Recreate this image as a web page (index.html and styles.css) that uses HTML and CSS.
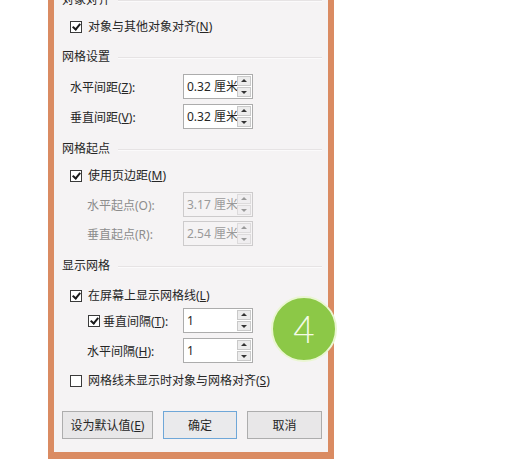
FILE: index.html
```html
<!DOCTYPE html>
<html lang="zh">
<head>
<meta charset="utf-8">
<link rel="stylesheet" href="styles.css">
</head>
<body>
<div class="dialog">
  <div class="section">对象对齐</div>
  <div class="check-row g1"><span class="cb on"></span><span>对象与其他对象对齐(<u>N</u>)</span></div>

  <div class="section g2">网格设置</div>
  <div class="field-row g3"><span class="lbl"><span>水平间距(<u>Z</u>):</span></span><span class="spin"><span class="val">0.32 厘米</span><span class="arrows"><i class="up"></i><i class="dn"></i></span></span></div>
  <div class="field-row g4"><span class="lbl"><span>垂直间距(<u>V</u>):</span></span><span class="spin"><span class="val">0.32 厘米</span><span class="arrows"><i class="up"></i><i class="dn"></i></span></span></div>

  <div class="section g5">网格起点</div>
  <div class="check-row g1"><span class="cb on"></span><span>使用页边距(<u>M</u>)</span></div>
  <div class="field-row sub dis g6"><span class="lbl"><span>水平起点(O):</span></span><span class="spin"><span class="val">3.17 厘米</span><span class="arrows"><i class="up"></i><i class="dn"></i></span></span></div>
  <div class="field-row sub dis g7"><span class="lbl"><span>垂直起点(R):</span></span><span class="spin"><span class="val">2.54 厘米</span><span class="arrows"><i class="up"></i><i class="dn"></i></span></span></div>

  <div class="section g5">显示网格</div>
  <div class="check-row g2"><span class="cb on"></span><span>在屏幕上显示网格线(<u>L</u>)</span></div>
  <div class="field-row nested g7"><span class="lbl"><span class="cb on"></span><span>垂直间隔(<u>T</u>):</span></span><span class="spin"><span class="val">1</span><span class="arrows"><i class="up"></i><i class="dn"></i></span></span></div>
  <div class="field-row sub g8"><span class="lbl"><span>水平间隔(<u>H</u>):</span></span><span class="spin"><span class="val">1</span><span class="arrows"><i class="up"></i><i class="dn"></i></span></span></div>
  <div class="check-row g9"><span class="cb"></span><span>网格线未显示时对象与网格对齐(<u>S</u>)</span></div>

  <div class="buttons">
    <button class="btn b1">设为默认值(<u>E</u>)</button>
    <button class="btn b2 primary">确定</button>
    <button class="btn b3">取消</button>
  </div>
</div>
<div class="badge">4</div>
</body>
</html>
```

FILE: styles.css
```css
html, body {
  margin: 0;
  padding: 0;
  background: #ffffff;
  width: 517px;
  height: 464px;
  overflow: hidden;
  font-family: "Noto Sans", "Noto Sans CJK SC", sans-serif;
  font-size: 12px;
  color: #262626;
}

.dialog {
  box-sizing: border-box;
  width: 286px;
  margin: -8px 0 0 48px;
  background: #f5f3f4;
  border: 6px solid #da8b62;
  border-top: 0;
  border-bottom-width: 7px;
  padding: 0 6px 13px 8px;
}

u { text-decoration: underline; text-underline-offset: 1px; }

.section {
  height: 16px;
  line-height: 16px;
  display: flex;
  align-items: center;
  gap: 8px;
}
.section::after {
  content: "";
  flex: 1;
  height: 1px;
  background: #e6e3e4;
  box-shadow: 0 1px 0 #fbfafb;
}

.check-row {
  height: 16px;
  line-height: 16px;
  display: flex;
  align-items: center;
  gap: 6px;
  padding-left: 8px;
}

.cb {
  box-sizing: border-box;
  width: 12px;
  height: 12px;
  border: 1px solid #3a3a3a;
  background: #ffffff;
  display: inline-block;
  position: relative;
  flex: none;
}
.cb.on::after {
  content: "";
  position: absolute;
  left: 3px;
  top: 0px;
  width: 3px;
  height: 6px;
  border-right: 2px solid #1a1a1a;
  border-bottom: 2px solid #1a1a1a;
  transform: rotate(40deg);
}

.field-row {
  height: 25px;
  display: flex;
  align-items: center;
  padding-left: 8px;
}
.field-row .lbl {
  width: 113px;
  flex: none;
  display: flex;
  align-items: center;
  gap: 3px;
}
.field-row.sub { padding-left: 25px; }
.field-row.sub .lbl { width: 96px; }
.field-row.nested { padding-left: 26px; }
.field-row.nested .lbl { width: 95px; }
.field-row.dis { color: #8c8c8c; }

.spin {
  box-sizing: border-box;
  width: 70px;
  height: 25px;
  border: 1px solid #acacac;
  background: #ffffff;
  display: flex;
  align-items: stretch;
}
.dis .spin {
  border-color: #cdcbcc;
  background: #f5f3f4;
  color: #9a9a9a;
}
.spin .val {
  flex: 1;
  padding-left: 3px;
  line-height: 23px;
  white-space: nowrap;
  overflow: hidden;
}
.arrows {
  width: 14px;
  display: flex;
  flex-direction: column;
  gap: 1px;
  padding: 1px 1px 1px 0;
}
.arrows i {
  flex: 1;
  background: #ececec;
  border: 1px solid #c9c9c9;
  position: relative;
}
.dis .arrows i { background: #f0eef0; border-color: #dddbdc; }
.arrows i::after {
  content: "";
  position: absolute;
  left: 50%;
  top: 50%;
  margin-left: -3px;
  border-left: 3px solid transparent;
  border-right: 3px solid transparent;
}
.arrows i.up::after { margin-top: -2px; border-bottom: 3px solid #333; }
.arrows i.dn::after { margin-top: -1px; border-top: 3px solid #333; }
.dis .arrows i.up::after { border-bottom-color: #9a9a9a; }
.dis .arrows i.dn::after { border-top-color: #9a9a9a; }

.g1 { margin-top: 11px; }
.g2 { margin-top: 14px; }
.g3 { margin-top: 9px; }
.g4 { margin-top: 5px; }
.g5 { margin-top: 12px; }
.g6 { margin-top: 8px; }
.g7 { margin-top: 4px; }
.g8 { margin-top: 5px; }
.g9 { margin-top: 10px; }

.buttons {
  margin-top: 22px;
  display: flex;
  gap: 10px;
}
.btn {
  box-sizing: border-box;
  height: 28px;
  border: 1px solid #adadad;
  background: #e8e7e8;
  font: inherit;
  color: #262626;
  padding: 0;
}
.b1 { width: 91px; }
.b2 { width: 74px; }
.b3 { width: 75px; }
.btn.primary { border-color: #6fa7d8; background: #eaeaec; }

.badge {
  position: absolute;
  left: 271px;
  top: 296px;
  width: 66px;
  height: 66px;
  box-sizing: border-box;
  border-radius: 50%;
  background: #8cc847;
  border: 2px solid #eaf6d2;
  color: #f4fbe6;
  font-family: "Lato", "Open Sans", sans-serif;
  font-weight: 300;
  font-size: 37px;
  line-height: 62px;
  text-align: center;
}
```
